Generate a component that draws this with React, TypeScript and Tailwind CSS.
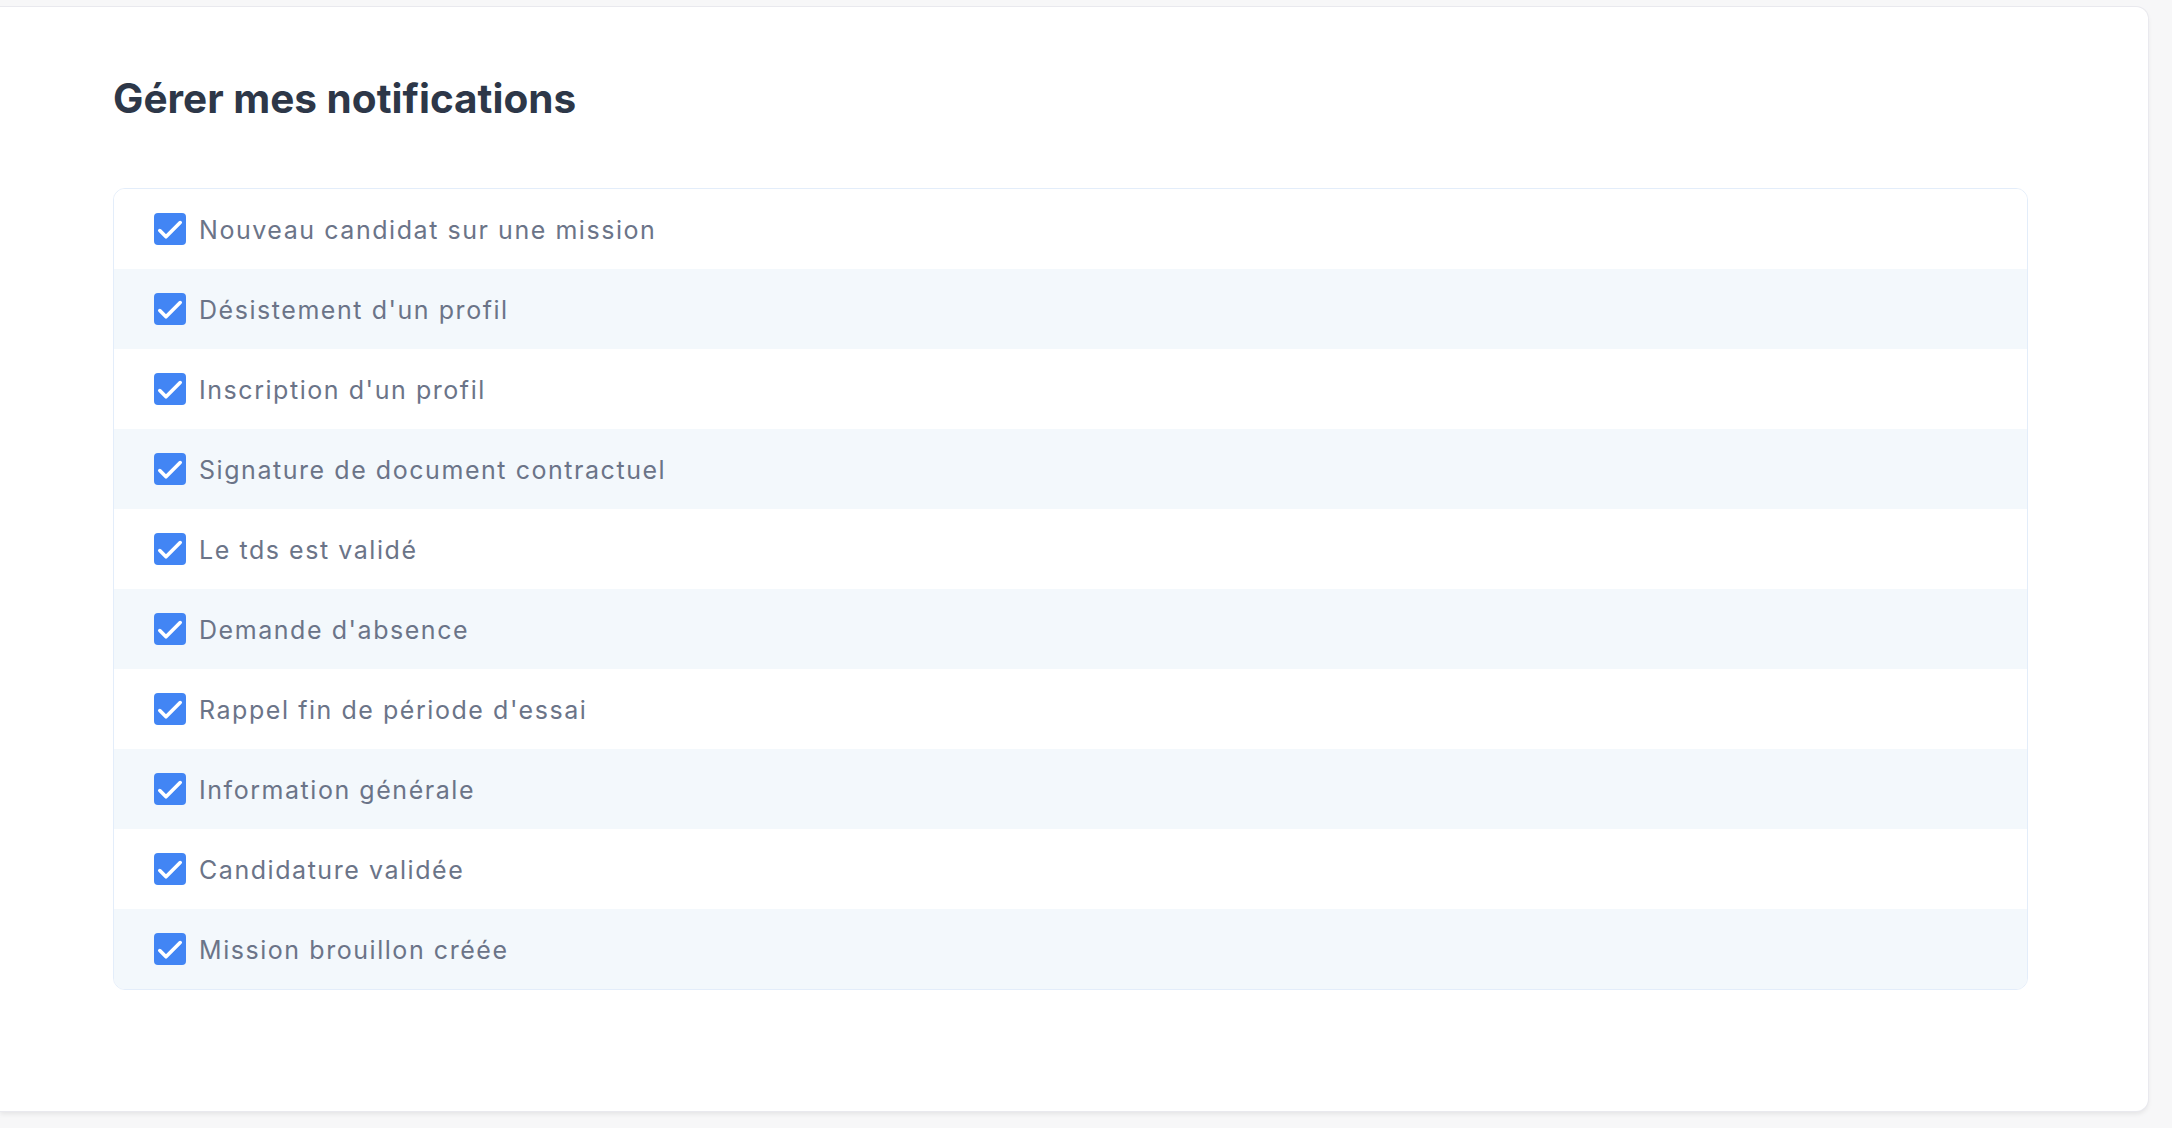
import React from "react";

const items = [
  "Nouveau candidat sur une mission",
  "Désistement d'un profil",
  "Inscription d'un profil",
  "Signature de document contractuel",
  "Le tds est validé",
  "Demande d'absence",
  "Rappel fin de période d'essai",
  "Information générale",
  "Candidature validée",
  "Mission brouillon créée",
];

function CheckBox() {
  return (
    <span className="flex h-[32px] w-[32px] shrink-0 items-center justify-center rounded-[4px] bg-[#4285f4]">
      <svg width="32" height="32" viewBox="0 0 32 32" fill="none">
        <path
          d="M5.8 17.6 L12 23.8 L26.2 9.6"
          stroke="#ffffff"
          strokeWidth="3.6"
          strokeLinecap="round"
          strokeLinejoin="round"
        />
      </svg>
    </span>
  );
}

export default function App() {
  return (
    <div
      className="min-h-[1128px] w-full overflow-hidden bg-[#f7f7f8] pt-[7px] pr-[24px]"
      style={{ fontFamily: "Inter, 'Noto Sans', sans-serif" }}
    >
      <div className="rounded-r-[12px] bg-white pt-[72px] pb-[121px] pl-[113px] pr-[120px] shadow-[0_0_0_1px_#e9e9ee,0_3px_5px_rgba(0,0,0,0.08)]">
        <h1 className="mb-[69px] text-[40.5px] leading-[40px] font-bold text-[#2d3748]">
          Gérer mes notifications
        </h1>
        <div className="overflow-hidden rounded-[12px] border border-[#e3edfa]">
          {items.map((label, i) => (
            <label
              key={label}
              className={`flex h-[80px] items-center gap-[13px] pl-[40px] ${
                i % 2 === 1 ? "bg-[#f3f8fc]" : "bg-white"
              }`}
            >
              <CheckBox />
              <span className="pt-[3px] text-[25px] leading-none tracking-[0.062em] text-[#6b7488]">
                {label}
              </span>
            </label>
          ))}
        </div>
      </div>
    </div>
  );
}
